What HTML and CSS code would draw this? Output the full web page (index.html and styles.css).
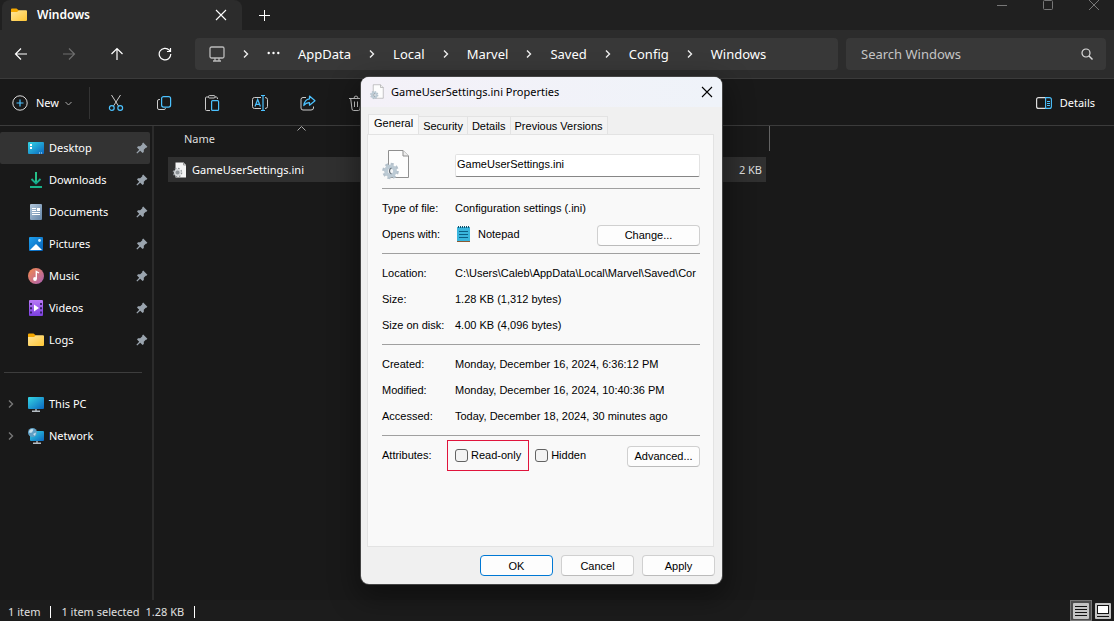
FILE: index.html
```html
<!DOCTYPE html>
<html lang="en">
<head>
<meta charset="utf-8">
<title>Windows</title>
<link rel="stylesheet" href="styles.css">
</head>
<body>

<!-- shared icons -->
<svg class="defs" width="0" height="0">
	<defs>
		<linearGradient id="gFolder" x1="0" y1="0" x2="1" y2="1"><stop offset="0" stop-color="#ffe69c"/><stop offset="1" stop-color="#ffc634"/></linearGradient>
		<linearGradient id="gScreen" x1="0" y1="0" x2="1" y2="1"><stop offset="0" stop-color="#35d6e4"/><stop offset="1" stop-color="#0a66c0"/></linearGradient>
		<linearGradient id="gDown" x1="0" y1="0" x2="0" y2="1"><stop offset="0" stop-color="#2fd08a"/><stop offset="1" stop-color="#12a08c"/></linearGradient>
		<linearGradient id="gDoc" x1="0" y1="0" x2="1" y2="1"><stop offset="0" stop-color="#b3c8dc"/><stop offset="1" stop-color="#6484a6"/></linearGradient>
		<linearGradient id="gPic" x1="0" y1="0" x2="1" y2="1"><stop offset="0" stop-color="#1ea0ee"/><stop offset="1" stop-color="#0660b6"/></linearGradient>
		<linearGradient id="gMusic" x1="0" y1="0" x2="1" y2="1"><stop offset="0" stop-color="#f58a4b"/><stop offset="1" stop-color="#a95fb4"/></linearGradient>
		<linearGradient id="gVideo" x1="0" y1="0" x2="0" y2="1"><stop offset="0" stop-color="#b878f6"/><stop offset="1" stop-color="#7c3fe0"/></linearGradient>
	</defs>
	<symbol id="folder" viewBox="0 0 16 16">
		<path d="M0 2.5Q0 1.5 1 1.5H5.5L8 3.5V6H0z" fill="#f5a800"/>
		<path d="M0 5H6L8 3.2H15Q16 3.2 16 4.2V13Q16 14 15 14H1Q0 14 0 13z" fill="url(#gFolder)"/>
	</symbol>
	<symbol id="pin" viewBox="0 0 12 12">
		<path d="M7.2 .6L11.4 4.8 10.4 5.8 9.8 5.7 7.8 7.8 7.8 10 6.6 11 4.2 8.8 1.2 11.6 .4 10.8 3.2 7.8 1 5.4 2 4.2 4.2 4.2 6.3 2.2 6.2 1.6z" fill="#9aa4ae"/>
	</symbol>
	<symbol id="chevron" viewBox="0 0 6 10">
		<path d="M1 1.5L4.5 5 1 8.5" fill="none" stroke="currentColor" stroke-width="1.4"/>
	</symbol>
	<symbol id="cross" viewBox="0 0 12 12">
		<path d="M1 1L11 11M11 1L1 11" fill="none" stroke="currentColor" stroke-width="1.1"/>
	</symbol>
	<symbol id="inifile" viewBox="0 0 28 32">
		<path d="M6.5 1.5H21L26.5 7V28.5H6.5z" fill="#fdfdfd" stroke="#8f8f8f"/>
		<path d="M21 1.5V7H26.5" fill="#eee" stroke="#8f8f8f"/>
		<circle cx="8.5" cy="22" r="6.8" fill="none" stroke="#b4c1cb" stroke-width="3" stroke-dasharray="2.9 2.44"/>
		<circle cx="8.5" cy="22" r="4.5" fill="#f2f4f6" stroke="#bccad4" stroke-width="3.8"/>
		<path d="M9.5 19A3.2 3.2 0 0 0 9.5 25" fill="none" stroke="#66717b" stroke-width="1.3"/>
	</symbol>
</svg>

<div class="titlebar">
	<div class="win_tab">
		<svg width="16" height="16"><use href="#folder"/></svg>
		<span class="tab_name">Windows</span>
		<button type="button" class="ico_btn" aria-label="Close tab"><svg width="12" height="12"><use href="#cross"/></svg></button>
	</div>
	<button type="button" class="ico_btn new_tab" aria-label="New tab"><svg width="12" height="12"><path d="M6.5 1V12M1 6.5H12" stroke="currentColor"/></svg></button>
	<div class="win_ctrl">
		<button type="button" class="ico_btn" aria-label="Minimize"><svg width="10" height="10"><path d="M0 5.5H10" stroke="currentColor"/></svg></button>
		<button type="button" class="ico_btn" aria-label="Maximize"><svg width="10" height="10"><rect x=".5" y=".5" width="9" height="9" rx="1" fill="none" stroke="currentColor"/></svg></button>
		<button type="button" class="ico_btn" aria-label="Close"><svg width="10" height="10"><path d="M0 0L10 10M10 0L0 10" stroke="currentColor"/></svg></button>
	</div>
</div>

<div class="navbar">
	<div class="nav_btns">
		<button type="button" class="ico_btn" aria-label="Back"><svg width="14" height="14"><path d="M13 7H1.5M7 1.5L1.5 7 7 12.5" fill="none" stroke="currentColor" stroke-width="1.2"/></svg></button>
		<button type="button" class="ico_btn" aria-label="Forward" disabled><svg width="14" height="14"><path d="M1 7H12.5M7 1.5L12.5 7 7 12.5" fill="none" stroke="currentColor" stroke-width="1.2"/></svg></button>
		<button type="button" class="ico_btn" aria-label="Up"><svg width="14" height="14"><path d="M7 13V1.5M1.5 7L7 1.5 12.5 7" fill="none" stroke="currentColor" stroke-width="1.2"/></svg></button>
		<button type="button" class="ico_btn" aria-label="Refresh"><svg width="14" height="14"><path d="M12.8 7A5.8 5.8 0 1 1 11.3 3.2L12.5 4.5M12.5 1V4.5H9" fill="none" stroke="currentColor" stroke-width="1.2"/></svg></button>
	</div>
	<nav class="address">
		<button type="button" class="crumb" aria-label="Computer"><svg width="16" height="16"><rect x="1" y="1" width="14" height="11" rx="1.5" fill="none" stroke="#bbb" stroke-width="1.3"/><path d="M6 12V14.5M10 12V14.5M4 15H12" stroke="#bbb" stroke-width="1.3"/></svg></button>
		<svg class="sep" width="6" height="10"><use href="#chevron"/></svg>
		<button type="button" class="crumb" aria-label="More"><svg width="13" height="10"><circle cx="1.7" cy="4" r="1.2" fill="#fff"/><circle cx="6.5" cy="4" r="1.2" fill="#fff"/><circle cx="11.3" cy="4" r="1.2" fill="#fff"/></svg></button>
		<button type="button" class="crumb">AppData</button>
		<svg class="sep" width="6" height="10"><use href="#chevron"/></svg>
		<button type="button" class="crumb">Local</button>
		<svg class="sep" width="6" height="10"><use href="#chevron"/></svg>
		<button type="button" class="crumb">Marvel</button>
		<svg class="sep" width="6" height="10"><use href="#chevron"/></svg>
		<button type="button" class="crumb">Saved</button>
		<svg class="sep" width="6" height="10"><use href="#chevron"/></svg>
		<button type="button" class="crumb">Config</button>
		<svg class="sep" width="6" height="10"><use href="#chevron"/></svg>
		<button type="button" class="crumb">Windows</button>
	</nav>
	<div class="search">
		<input type="text" placeholder="Search Windows" aria-label="Search Windows">
		<svg width="12" height="12"><circle cx="5" cy="5" r="4" fill="none" stroke="#ddd" stroke-width="1.2"/><path d="M8 8L11.5 11.5" stroke="#ddd" stroke-width="1.4"/></svg>
	</div>
</div>

<div class="toolbar">
	<button type="button" class="txt_btn new_btn">
		<svg width="16" height="16"><circle cx="8" cy="8" r="7.2" fill="none" stroke="#ddd"/><path d="M8 4.5V11.5M4.5 8H11.5" stroke="#4cc2ff" stroke-width="1.2"/></svg>
		<span>New</span>
		<svg class="arrow" width="7" height="5"><path d="M.5 1L3.5 4 6.5 1" fill="none" stroke="#aaa"/></svg>
	</button>
	<div class="tools">
		<button type="button" class="ico_btn" aria-label="Cut"><svg width="16" height="16"><path d="M3.5 0L10.5 11M12.5 0L5.5 11" stroke="#ccc" fill="none"/><circle cx="3.8" cy="13" r="2.4" fill="none" stroke="#4cc2ff" stroke-width="1.2"/><circle cx="12.2" cy="13" r="2.4" fill="none" stroke="#4cc2ff" stroke-width="1.2"/></svg></button>
		<button type="button" class="ico_btn" aria-label="Copy"><svg width="16" height="16"><path d="M4 4.5H3Q1.5 4.5 1.5 6V13Q1.5 14.5 3 14.5H8Q9.5 14.5 9.5 13.2" fill="none" stroke="#ccc"/><rect x="5.6" y="1.6" width="9" height="10.5" rx="2" fill="none" stroke="#4cc2ff" stroke-width="1.2"/></svg></button>
		<button type="button" class="ico_btn" aria-label="Paste"><svg width="16" height="16"><path d="M4.5 2H2.5Q1.5 2 1.5 3V14.5Q1.5 15.5 2.5 15.5H6M11 2H12.5Q13.5 2 13.5 4" fill="none" stroke="#ccc"/><rect x="4.5" y=".6" width="6.5" height="2.4" rx="1" fill="none" stroke="#ccc"/><rect x="7.6" y="5.6" width="7" height="9.8" rx="1" fill="none" stroke="#4cc2ff" stroke-width="1.2"/></svg></button>
		<button type="button" class="ico_btn" aria-label="Rename"><svg width="16" height="16"><path d="M9 2.5H2.5Q.5 2.5 .5 4.5V11.5Q.5 13.5 2.5 13.5H9M13 2.5Q15.5 2.5 15.5 4.5V11.5Q15.5 13.5 13 13.5" fill="none" stroke="#ccc"/><path d="M11 .5V15.5M9 .5H13M9 15.5H13M3 11.5L5.7 4.5 8.4 11.5M4 9.3H7.4" fill="none" stroke="#4cc2ff" stroke-width="1.2"/></svg></button>
		<button type="button" class="ico_btn" aria-label="Share"><svg width="16" height="16"><path d="M6 2.5H3Q1 2.5 1 4.5V13Q1 15 3 15H11Q13.5 15 13.5 13V11.5" fill="none" stroke="#ccc"/><path d="M9.5 1L15 5.7 9.5 10.2V7.7Q6 7.5 3.8 10.5 4.5 4.5 9.5 3.8z" fill="none" stroke="#4cc2ff" stroke-width="1.2" stroke-linejoin="round"/></svg></button>
		<button type="button" class="ico_btn" aria-label="Delete"><svg width="16" height="16"><path d="M1 3.5H15M2.7 3.5L4 14Q4.2 15.5 5.5 15.5H10.5Q11.8 15.5 12 14L13.3 3.5M6 3.5Q6 1 8 1T10 3.5M6.5 6.5V12M9.5 6.5V12" fill="none" stroke="#ccc"/></svg></button>
	</div>
	<button type="button" class="txt_btn details_btn">
		<svg width="16" height="12"><path d="M10 .6H2.6Q.6 .6 .6 2.6V9.4Q.6 11.4 2.6 11.4H10" fill="none" stroke="#ddd" stroke-width="1.2"/><path d="M9.6 .6H13.4Q15.4 .6 15.4 2.6V9.4Q15.4 11.4 13.4 11.4H9.6zM11 4.5H14M11 6.5H14M11 8.5H14" fill="none" stroke="#4cc2ff" stroke-width="1.1"/></svg>
		<span>Details</span>
	</button>
</div>

<div class="main">
	<div class="sidebar">
		<ul class="side_list">
			<li class="on">
				<svg class="ico" width="16" height="16"><rect y="2" width="16" height="12" rx="1" fill="url(#gScreen)"/><path d="M2 4H4V6H2zM2 7H4V9H2z" fill="#fff"/><path d="M11 13H12M13 13H14" stroke="#cfe9ff"/></svg>
				<span>Desktop</span><svg class="pin" width="12" height="12"><use href="#pin"/></svg>
			</li>
			<li>
				<svg class="ico" width="16" height="16"><path d="M8 0V11M3.5 7L8 11.5 12.5 7" fill="none" stroke="url(#gDown)" stroke-width="1.8"/><path d="M7.1 0H8.9V10H7.1z" fill="#26c28a"/><rect x="2" y="14" width="12" height="2" fill="#19b28b"/></svg>
				<span>Downloads</span><svg class="pin" width="12" height="12"><use href="#pin"/></svg>
			</li>
			<li>
				<svg class="ico" width="16" height="16"><rect x="2" width="12" height="16" rx="1" fill="url(#gDoc)"/><path d="M4 4.5H8M4 6.5H8M4 8.5H12M4 10.5H12" stroke="#fff"/><rect x="9" y="4" width="3" height="3" fill="#fff"/></svg>
				<span>Documents</span><svg class="pin" width="12" height="12"><use href="#pin"/></svg>
			</li>
			<li>
				<svg class="ico" width="16" height="16"><rect x="1" y="1" width="14" height="14" rx="1" fill="url(#gPic)"/><path d="M2 14L8 8 14 14z" fill="#fff"/><circle cx="11.5" cy="4.5" r="1.4" fill="#d4efff"/></svg>
				<span>Pictures</span><svg class="pin" width="12" height="12"><use href="#pin"/></svg>
			</li>
			<li>
				<svg class="ico" width="16" height="16"><circle cx="8" cy="8" r="8" fill="url(#gMusic)"/><circle cx="7" cy="11" r="1.9" fill="#fff"/><path d="M8.3 11V3.5L11 5" fill="none" stroke="#fff" stroke-width="1.4"/></svg>
				<span>Music</span><svg class="pin" width="12" height="12"><use href="#pin"/></svg>
			</li>
			<li>
				<svg class="ico" width="16" height="16"><rect x="1" width="14" height="16" rx="1" fill="url(#gVideo)"/><path d="M3 3V14M13 3V14" stroke="#38206a" stroke-width="2" stroke-dasharray="2 2.3"/><path d="M6 4.5L11 8 6 11.5z" fill="#fff"/></svg>
				<span>Videos</span><svg class="pin" width="12" height="12"><use href="#pin"/></svg>
			</li>
			<li>
				<svg class="ico" width="16" height="16"><use href="#folder"/></svg>
				<span>Logs</span><svg class="pin" width="12" height="12"><use href="#pin"/></svg>
			</li>
		</ul>
		<ul class="side_list side_tree">
			<li>
				<svg class="exp" width="6" height="10"><use href="#chevron"/></svg>
				<svg class="ico" width="16" height="16"><rect y="1" width="16" height="12" rx="1" fill="url(#gScreen)"/><path d="M8 13V15M4 15.3H12" stroke="#b5bdc4" stroke-width="1.4"/></svg>
				<span>This PC</span>
			</li>
			<li>
				<svg class="exp" width="6" height="10"><use href="#chevron"/></svg>
				<svg class="ico" width="16" height="16"><rect x="2" y="3" width="14" height="10" rx="1" fill="url(#gScreen)"/><path d="M9 13V15M5 15.3H13" stroke="#b5bdc4" stroke-width="1.4"/><circle cx="4.5" cy="4.5" r="4.5" fill="#5f9fc4"/><path d="M1 3Q3 0 5.5 1.5L4 4.5 1.5 5zM5 6L8 4.5 7 8z" fill="#c7e2ee"/></svg>
				<span>Network</span>
			</li>
		</ul>
	</div>
	<div class="content">
		<table class="file_list">
			<thead>
				<tr>
					<th class="col_name"><svg class="sort" width="9" height="5"><path d="M.5 4.5L4.5 .5 8.5 4.5" fill="none" stroke="#aaa"/></svg>Name</th>
					<th class="col_size"></th>
				</tr>
			</thead>
			<tbody>
				<tr>
					<td>
						<div class="file_name">
							<svg width="15" height="16"><path d="M3.5 .5H11.5L14 3V15.5H3.5z" fill="#f4f4f4"/><path d="M11.5 .5V3H14" fill="none" stroke="#999"/><circle cx="5.5" cy="10.5" r="4.1" fill="none" stroke="#8d9296" stroke-width="1.4" stroke-dasharray="1.7 1.52"/><circle cx="5.5" cy="10.5" r="2.8" fill="#8d9296" stroke="#d5d8da" stroke-width="1.4"/></svg>
							GameUserSettings.ini
						</div>
					</td>
					<td class="size">2 KB</td>
				</tr>
			</tbody>
		</table>
	</div>
</div>

<div class="statusbar">
	<span class="count">1 item</span>
	<span class="selected">1 item selected</span>
	<span class="bytes">1.28 KB</span>
	<div class="views">
		<button type="button" class="view on" aria-label="Details view"><svg width="16" height="16"><rect width="16" height="16" rx="1" fill="#c4c4c4"/><path d="M2 3.5H14M2 6.5H14M2 9.5H14M2 12.5H14" stroke="#111"/></svg></button>
		<button type="button" class="view" aria-label="Large icons"><svg width="16" height="16"><rect width="16" height="16" rx="1" fill="#c4c4c4"/><rect x="2.5" y="2.5" width="11" height="8" fill="#fff" stroke="#111"/><path d="M2 13.5H14" stroke="#111"/></svg></button>
	</div>
</div>

<!-- properties window -->
<div class="dialog" role="dialog" aria-labelledby="dlgTitle">
	<div class="dlg_title">
		<svg width="14" height="16"><use href="#inifile"/></svg>
		<span id="dlgTitle">GameUserSettings.ini Properties</span>
		<button type="button" class="ico_btn" aria-label="Close"><svg width="12" height="12"><use href="#cross"/></svg></button>
	</div>
	<div class="dlg_tabs">
		<button type="button" class="on">General</button>
		<button type="button">Security</button>
		<button type="button">Details</button>
		<button type="button">Previous Versions</button>
	</div>
	<div class="dlg_panel">
		<div class="group head">
			<svg width="28" height="32"><use href="#inifile"/></svg>
			<input type="text" class="inp_name" value="GameUserSettings.ini" aria-label="File name">
		</div>
		<div class="group">
			<div class="row"><span class="label">Type of file:</span><span>Configuration settings (.ini)</span></div>
			<div class="row">
				<span class="label">Opens with:</span>
				<svg class="notepad" width="16" height="16"><rect x="2" y="1" width="13" height="14" fill="#39b5dd"/><path d="M2 15.5H15" stroke="#8a5a33"/><path d="M4 5.5H13M4 8.5H13M4 11.5H13" stroke="#0b5f86"/><path d="M3.5 0V2M5.5 0V2M7.5 0V2M9.5 0V2M11.5 0V2M13.5 0V2" stroke="#12506d"/></svg>
				<span>Notepad</span>
				<button type="button" class="btn btn_change">Change...</button>
			</div>
		</div>
		<div class="group">
			<div class="row"><span class="label">Location:</span><span class="path">C:\Users\Caleb\AppData\Local\Marvel\Saved\Cor</span></div>
			<div class="row"><span class="label">Size:</span><span>1.28 KB (1,312 bytes)</span></div>
			<div class="row"><span class="label">Size on disk:</span><span>4.00 KB (4,096 bytes)</span></div>
		</div>
		<div class="group">
			<div class="row"><span class="label">Created:</span><span>Monday, December 16, 2024, 6:36:12 PM</span></div>
			<div class="row"><span class="label">Modified:</span><span>Monday, December 16, 2024, 10:40:36 PM</span></div>
			<div class="row"><span class="label">Accessed:</span><span>Today, December 18, 2024, 30 minutes ago</span></div>
		</div>
		<div class="group">
			<div class="row">
				<span class="label">Attributes:</span>
				<label class="check marked"><input type="checkbox">Read-only</label>
				<label class="check"><input type="checkbox">Hidden</label>
				<button type="button" class="btn">Advanced...</button>
			</div>
		</div>
	</div>
	<div class="dlg_foot">
		<button type="button" class="btn primary">OK</button>
		<button type="button" class="btn">Cancel</button>
		<button type="button" class="btn">Apply</button>
	</div>
</div>

</body>
</html>
```
FILE: styles.css
```css
*{box-sizing:border-box;}
body,ul,li,table,th,td,button,input{margin:0;padding:0;}
html,body{height:100%;}
body{display:flex;flex-direction:column;position:relative;overflow:hidden;background:#191919;color:#fff;font-family:"Segoe UI","Noto Sans",sans-serif;font-size:11px;line-height:16px;}
button,input{border:none;background:none;color:inherit;font:inherit;}
li{list-style:none;}
svg{display:block;flex:none;}
.defs{position:absolute;}
.ico_btn{display:flex;align-items:center;justify-content:center;}

/* title bar */
.titlebar{display:flex;flex:none;height:30px;background:#202020;}
.win_tab{display:flex;align-items:center;width:240px;margin-left:2px;padding:0 15px 1px 9px;border-radius:8px 8px 0 0;background:#2c2c2c;}
.tab_name{flex:1;margin-left:10px;font-size:12px;font-weight:600;}
.new_tab{width:44px;}
.win_ctrl{display:flex;align-items:flex-start;gap:36px;margin-left:auto;padding-right:15px;color:#777;}

/* navigation */
.navbar{display:flex;flex:none;align-items:center;height:49px;padding:0 8px 0 3px;border-bottom:1px solid #3b3b3b;background:#2c2c2c;font-size:13px;}
.nav_btns{display:flex;gap:12px;margin-right:12px;}
.nav_btns .ico_btn{width:36px;height:32px;}
.nav_btns .ico_btn:disabled{color:#6e6e6e;}
.address{display:flex;flex:1;align-items:center;gap:18px;height:32px;margin-right:8px;padding-left:14px;border-radius:4px;background:#383838;}
.sep{color:#eee;}
.search{display:flex;align-items:center;width:260px;height:32px;padding:0 13px 0 15px;border-radius:4px;background:#383838;}
.search input{flex:1;min-width:0;outline:none;}
.search input::placeholder{color:#c5c5c5;}

/* command bar */
.toolbar{display:flex;flex:none;align-items:center;height:47px;padding:2px 19px 0 12px;border-bottom:1px solid #3b3b3b;}
.txt_btn{display:flex;align-items:center;gap:8px;}
.new_btn{width:78px;height:32px;border-right:1px solid #333;}
.new_btn .arrow{margin-left:-2px;}
.tools{display:flex;gap:12px;margin-left:8px;}
.tools .ico_btn{width:36px;height:32px;}
.details_btn{margin-left:auto;}

/* folders */
.main{display:flex;flex:1;min-height:0;}
.sidebar{width:154px;padding:6px 2px 0 0;border-right:2px solid #2b2b2b;}
.side_list li{display:flex;align-items:center;height:32px;padding:0 2px 0 28px;border-radius:2px;}
.side_list li.on{background:#333;}
.side_list span{margin-left:5px;}
.side_list .pin{margin-left:auto;}
.side_tree:before{display:block;height:1px;margin:16px 8px 15px 4px;background:#3d3d3d;content:'';}
.side_list.side_tree li{padding-left:8px;}
.exp{margin-right:14px;color:#777;}

/* files */
.content{flex:1;padding-left:14px;}
.file_list{width:602px;border-collapse:separate;border-spacing:0;}
.file_list th{height:25px;text-align:left;font-weight:normal;color:#dedede;vertical-align:top;}
.col_name{padding-left:16px;}
.col_size{width:320px;border-right:1px solid #636363;}
.sort{margin:0 0 0 113px;}
.file_list td{height:25px;background:#303030;}
.file_list tbody:before{display:block;height:6px;content:'';}
.file_name{display:flex;align-items:center;gap:5px;padding-left:4px;}
.file_list .size{padding-right:4px;border-right:4px solid #191919;color:#ddd;text-align:right;}

/* status bar */
.statusbar{display:flex;flex:none;align-items:center;height:21px;padding-left:8px;background:#1c1c1c;color:#e0e0e0;}
.count,.bytes{display:flex;align-items:center;padding-top:2px;}
.selected{padding-top:2px;}
.count:after,.bytes:after{width:1px;height:12px;margin:0 10px;background:#fff;content:'';}
.bytes{margin-left:6px;}
.views{display:flex;margin-left:auto;}
.view{display:flex;align-items:center;justify-content:center;width:22px;height:21px;border:1px solid transparent;}
.view.on{border-color:#777;background:#4d4d4d;}

/* properties window */
.dialog{position:absolute;left:361px;top:77px;width:361px;border-radius:8px;background:#f0f0f0;box-shadow:0 0 0 1px #444,0 10px 28px 4px rgba(0,0,0,.4);color:#000;font-family:"Liberation Sans",Arial,sans-serif;font-size:11px;line-height:15px;}
.dlg_title{display:flex;align-items:center;height:30px;padding:0 9px 1px;border-radius:8px 8px 0 0;background:linear-gradient(90deg,#f4f1f8,#eff3f9);font-family:"Segoe UI","Noto Sans",sans-serif;}
.dlg_title span{flex:1;margin-left:7px;}
.dlg_tabs{display:flex;align-items:flex-end;height:27px;padding:0 7px;}
.dlg_tabs button{height:18px;padding:1px 4px 0;border:1px solid #e3e3e3;border-width:1px 1px 0 0;background:#f3f3f3;}
.dlg_tabs .on{height:20px;padding:0 5px 2px;border-left-width:1px;background:#f9f9f9;}
.dlg_panel{height:413px;margin:0 8px 0 6px;padding:0 13px 0 14px;border:1px solid #e3e3e3;background:#f9f9f9;}
.group{padding:6px 0;border-top:1px solid #a0a0a0;}
.group.head{display:flex;align-items:center;height:53px;padding:7px 0 0;border:none;}
.inp_name{flex:1;height:23px;margin-left:45px;padding:0 1px 2px;border:1px solid #e3e3e3;border-bottom-color:#868686;border-radius:2px;background:#fff;}
.row{display:flex;align-items:center;height:26px;}
.label{flex:none;width:73px;}
.path{white-space:nowrap;}
.notepad{margin-right:7px;}
.btn{min-width:73px;height:21px;padding:1px 5px 0;border:1px solid #d0d0d0;border-bottom-color:#bbb;border-radius:4px;background:#fdfdfd;}
.row .btn{margin:2px 0 0 auto;}
.btn_change{width:103px;}
.check{display:flex;align-items:center;gap:3px;height:15px;margin-right:14px;}
.check input{width:13px;height:13px;border:1px solid #626262;border-radius:3px;background:#f3f3f3;appearance:none;}
.marked{outline:1px solid #e0143c;outline-offset:7px;}
.dlg_foot{display:flex;justify-content:flex-end;gap:8px;padding:8px 7px;}
.primary{border-color:#0078d4;}
```
